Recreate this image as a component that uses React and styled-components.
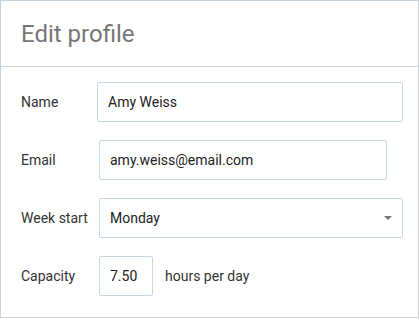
import React from 'react';
import styled, { createGlobalStyle } from 'styled-components';

const GlobalStyle = createGlobalStyle`
  html, body {
    margin: 0;
    padding: 0;
    background: #ffffff;
  }
  * {
    box-sizing: border-box;
  }
`;

const Panel = styled.div`
  width: 419px;
  height: 318px;
  border: 1px solid #c8d4dd;
  background: #ffffff;
  font-family: Roboto, "Liberation Sans", sans-serif;
`;

const Header = styled.div`
  height: 66px;
  display: flex;
  align-items: center;
  padding: 0 20px;
  border-bottom: 1px solid #c8d4dd;
`;

const Title = styled.h1`
  margin: 0;
  font-size: 24px;
  font-weight: 400;
  color: #777777;
  line-height: 28px;
`;

const Body = styled.div`
  display: flex;
  flex-direction: column;
  gap: 18px;
  padding: 15px 0 0 20px;
`;

const Row = styled.div`
  display: flex;
  align-items: center;
  height: 40px;
`;

const Label = styled.label`
  width: ${props => props.labelWidth}px;
  flex-shrink: 0;
  font-size: 14px;
  color: #333333;
`;

const TextInput = styled.input`
  width: ${props => props.width}px;
  height: 40px;
  padding: 0 10px;
  border: 1px solid #c8d6e0;
  border-radius: 2px;
  font-family: Roboto, "Liberation Sans", sans-serif;
  font-size: 14px;
  color: #222222;
  background: #ffffff;
  outline: none;
`;

const SelectBox = styled.div`
  position: relative;
  width: ${props => props.width}px;
  height: 40px;
  display: flex;
  align-items: center;
  padding: 0 10px;
  border: 1px solid #c8d6e0;
  border-radius: 2px;
  font-size: 14px;
  color: #222222;
`;

const Caret = styled.span`
  position: absolute;
  right: 10px;
  top: 17px;
  width: 0;
  height: 0;
  border-left: 4px solid transparent;
  border-right: 4px solid transparent;
  border-top: 4px solid #777777;
`;

const Suffix = styled.span`
  margin-left: 12px;
  font-size: 14px;
  color: #333333;
`;

const App = () => {
  return (
    <>
      <GlobalStyle />
      <Panel>
        <Header>
          <Title>Edit profile</Title>
        </Header>
        <Body>
          <Row>
            <Label labelWidth={76}>Name</Label>
            <TextInput width={306} defaultValue="Amy Weiss" />
          </Row>
          <Row>
            <Label labelWidth={78}>Email</Label>
            <TextInput width={288} defaultValue="amy.weiss@email.com" />
          </Row>
          <Row>
            <Label labelWidth={78}>Week start</Label>
            <SelectBox width={304}>
              Monday
              <Caret />
            </SelectBox>
          </Row>
          <Row>
            <Label labelWidth={78}>Capacity</Label>
            <TextInput width={54} defaultValue="7.50" />
            <Suffix>hours per day</Suffix>
          </Row>
        </Body>
      </Panel>
    </>
  );
};

export default App;
